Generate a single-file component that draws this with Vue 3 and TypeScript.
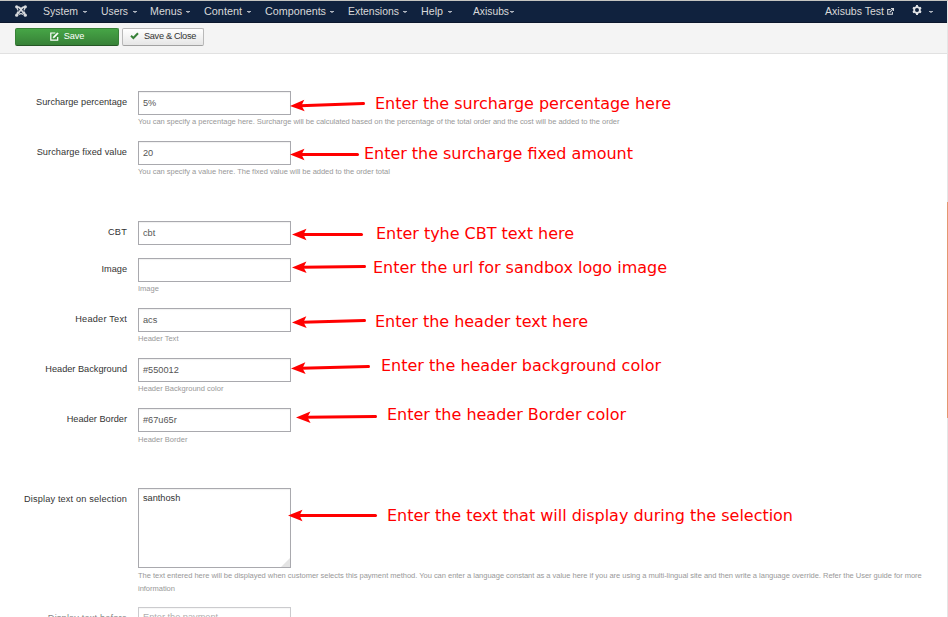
<script setup lang="ts">
interface MenuItem { label: string; width: number; spread: string; gap: number }
interface Field { label: string; value: string; tracking?: number; help?: string; low?: boolean; long?: boolean; end?: boolean; area?: boolean; faded?: boolean }
interface Note { text: string; x: number; y: number; width: number; from: [number, number]; to: [number, number] }

const menu: MenuItem[] = [
  { label: 'System', width: 58, spread: '35', gap: 5 },
  { label: 'Users', width: 49, spread: '27', gap: 5 },
  { label: 'Menus', width: 54, spread: '32', gap: 4 },
  { label: 'Content', width: 61, spread: '38', gap: 5 },
  { label: 'Components', width: 83, spread: '61', gap: 4 },
  { label: 'Extensions', width: 73, spread: '51', gap: 4 },
  { label: 'Help', width: 52, spread: '22', gap: 5 },
  { label: 'Axisubs', width: 50, spread: '36', gap: 1 },
]

const fields: Field[] = [
  { label: 'Surcharge percentage', value: '5%', long: true, help: 'You can specify a percentage here. Surcharge will be calculated based on the percentage of the total order and the cost will be added to the order' },
  { label: 'Surcharge fixed value', tracking: 0.07, value: '20', long: true, help: 'You can specify a value here. The fixed value will be added to the order total', end: true },
  { label: 'CBT', tracking: 0.2, value: 'cbt' },
  { label: 'Image', value: '', help: 'Image' },
  { label: 'Header Text', tracking: 0.22, value: 'acs', help: 'Header Text' },
  { label: 'Header Background', value: '#550012', help: 'Header Background color' },
  { label: 'Header Border', value: '#67u65r', help: 'Header Border', low: true, end: true },
  { label: 'Display text on selection', tracking: 0.16, value: 'santhosh', area: true, low: true, long: true, help: 'The text entered here will be displayed when customer selects this payment method. You can enter a language constant as a value here if you are using a multi-lingual site and then write a language override. Refer the User guide for more information' },
  { label: 'Display text before', tracking: 0.16, value: 'Enter the payment', area: true, faded: true },
]

const notes: Note[] = [
  { text: 'Enter the surcharge percentage here', x: 375, y: 109, width: 296, from: [363.5, 103.5], to: [290, 106] },
  { text: 'Enter the surcharge fixed amount', x: 364, y: 159, width: 269, from: [357.5, 154.5], to: [290, 154.5] },
  { text: 'Enter tyhe CBT text here', x: 376, y: 239, width: 198, from: [361.5, 234.5], to: [292, 234.5] },
  { text: 'Enter the url for sandbox logo image', x: 373, y: 273, width: 294, from: [364.5, 266.5], to: [292, 267.5] },
  { text: 'Enter the header text here', x: 375, y: 327, width: 213, from: [364.5, 320.5], to: [292, 322.5] },
  { text: 'Enter the header background color', x: 381, y: 371, width: 280, from: [368.5, 366.5], to: [291, 368.5] },
  { text: 'Enter the header Border color', x: 387, y: 420, width: 239, from: [375.5, 416.5], to: [296, 417.5] },
  { text: 'Enter the text that will display during the selection', x: 387, y: 521, width: 406, from: [375.5, 515.5], to: [288, 515.5] },
]

const angle = (n: Note): number => Math.atan2(n.from[1] - n.to[1], n.from[0] - n.to[0]) * 180 / Math.PI
const reach = (n: Note): number => Math.hypot(n.from[0] - n.to[0], n.from[1] - n.to[1])
</script>

<template>
  <div class="page">
    <header class="navbar">
      <svg class="brand" viewBox="0 0 12 12" width="12" height="12">
        <g fill="none" stroke="#d5d8dc" stroke-width="1.7">
          <path d="M2 2.2 Q4 1.8 5 3.2 L9.9 9.8 M10 2.2 Q8 1.8 7 3.2 L2.1 9.8" />
          <path d="M2.3 2.5 Q1.8 4.5 3.3 5.5 M9.7 2.5 Q10.2 4.5 8.7 5.5 M2.3 9.5 Q1.8 7.5 3.3 6.5 M9.7 9.5 Q10.2 7.5 8.7 6.5 M4 9.6 Q6 7.5 8 9.6 M4 2.5 Q6 4.5 8 2.5" stroke-width="1.3" />
        </g>
        <g fill="#d5d8dc"><circle cx="1.7" cy="1.8" r="1.6" /><circle cx="10.3" cy="1.8" r="1.6" /><circle cx="1.7" cy="10.2" r="1.6" /><circle cx="10.3" cy="10.2" r="1.6" /></g>
      </svg>
      <nav class="menu">
        <a v-for="m in menu" :key="m.label" class="menu-item" :style="{ width: m.width + 'px' }">
          <svg class="menu-text" :width="m.spread" height="16"><text x="0" y="11" :textLength="m.spread" lengthAdjust="spacingAndGlyphs">{{ m.label }}</text></svg>
          <i class="caret" :style="{ marginLeft: m.gap + 'px' }"></i>
        </a>
      </nav>
      <div class="account">
        <svg class="menu-text" width="59" height="16"><text x="0" y="11" textLength="59" lengthAdjust="spacingAndGlyphs">Axisubs Test</text></svg>
        <svg class="external" viewBox="0 0 8 8" width="7" height="7" fill="none" stroke="#d5d8dc">
          <path d="M4 1.7 H.8 V7.2 H6.2 V4.6 M3 5 L6.8 1.2" stroke-width="1.2" /><path d="M4.6 .6 H7.4 V3.4" stroke-width="1.3" />
        </svg>
        <svg class="gear" viewBox="0 0 10 10" width="10" height="10">
          <circle cx="5" cy="5" r="2.9" fill="none" stroke="#e1e3e6" stroke-width="1.8" />
          <path d="M5 0V2M5 8V10M.9 2.6L2.4 3.5M7.6 6.5L9.1 7.4M.9 7.4L2.4 6.5M7.6 3.5L9.1 2.6" stroke="#e1e3e6" stroke-width="1.9" />
        </svg>
        <i class="caret"></i>
      </div>
    </header>

    <div class="toolbar">
      <button class="btn save">
        <svg viewBox="0 0 9 9" width="9" height="9" fill="none" stroke="#fff">
          <path d="M5.3 1 H.8 V8.2 H7.7 V5" stroke-width="1.2" /><path d="M3 6 L3.5 4.5 L7.4 .7 L8.3 1.6 L4.5 5.5 Z" fill="#fff" stroke-width=".5" />
        </svg>
        <span>Save</span>
      </button>
      <button class="btn close">
        <svg viewBox="0 0 9 8" width="9" height="8"><path d="M1 3.8 L3.4 6 L8 1.3" fill="none" stroke="#378137" stroke-width="2" /></svg>
        <span>Save &amp; Close</span>
      </button>
    </div>

    <main class="form">
      <div v-for="f in fields" :key="f.label" class="row" :class="{ end: f.end, faded: f.faded }">
        <label class="label" :style="{ letterSpacing: (f.tracking ?? 0) + 'px' }">{{ f.label }}</label>
        <div class="control">
          <div class="box" :class="{ area: f.area }">
            {{ f.value }}
            <svg v-if="f.area" class="grip" viewBox="0 0 9 9" width="9" height="9"><path d="M9 0V9H0Z" fill="#e4e4e4" /></svg>
          </div>
          <p v-if="f.help" class="help" :class="{ low: f.low, long: f.long }">{{ f.help }}</p>
        </div>
      </div>
    </main>

    <svg class="notes" viewBox="0 0 948 617" width="948" height="617">
      <g v-for="n in notes" :key="n.text">
        <g :transform="`translate(${n.to[0]} ${n.to[1]}) rotate(${angle(n)})`">
          <path :d="`M10 0H${reach(n)}`" stroke="#f00" stroke-width="3" stroke-linecap="round" />
          <path d="M0 0L14.5 -5.8L11.5 0L14.5 5.8Z" fill="#f00" />
        </g>
        <text :x="n.x" :y="n.y" :textLength="n.width">{{ n.text }}</text>
      </g>
    </svg>
    <div class="scrollbar"><div class="thumb"></div></div>
  </div>
</template>

<style>
body { background: #fff; overflow: hidden; }
</style>

<style scoped>
.page { position: relative; width: 948px; height: 617px; overflow: hidden; box-sizing: border-box; font-family: "Liberation Sans", Arial, sans-serif; }
.navbar { display: flex; height: 23px; box-sizing: border-box; align-items: center; padding: 0 15px; background: #10223e; border-top: 1px solid #c5c5c1; border-bottom: 1px solid #0b172d; }
.brand { flex: none; margin: -1px 16px 0 0; }
.menu { display: flex; }
.menu-item { display: flex; align-items: center; height: 16px; flex: none; }
.menu-text { display: block; flex: none; overflow: visible; fill: #d9d9d9; font-size: 11.2px; }
.caret { width: 4px; height: 1px; border-top: 1px solid #aeb4be; margin-top: 1px; flex: none; position: relative; }
.caret::after { content: ""; position: absolute; left: 1px; top: 0; width: 2px; height: 1px; background: #7c8595; }
.account { display: flex; align-items: center; margin-left: auto; }
.external { margin-left: 3px; }
.gear { margin: -3px 7px 0 18px; }
.toolbar { display: flex; gap: 3px; height: 31px; box-sizing: border-box; padding: 5px 15px 0; background: #f4f4f4; border-bottom: 1px solid #e1e1e1; }
.btn { display: flex; align-items: center; justify-content: center; height: 18px; padding: 0 0 2px; box-sizing: border-box; border: 1px solid #b9b9b9; border-bottom-color: #a2a2a2; border-radius: 2px; font: 9.2px/14px "Liberation Sans", Arial, sans-serif; color: #333; background: linear-gradient(#fff, #e6e6e6); }
.save { width: 104px; gap: 5px; letter-spacing: -0.1px; color: #fff; border-color: #378137 #378137 #255625; background: linear-gradient(#46a546, #378137); }
.close { width: 82px; gap: 5px; letter-spacing: -0.3px; }
.form { padding-top: 37px; }
.row { display: flex; gap: 11px; margin-bottom: 13px; }
.row.end { margin-bottom: 43px; }
.label { width: 127px; flex: none; text-align: right; font-size: 9.2px; line-height: 22px; color: #333; white-space: nowrap; }
.control { width: 797px; }
.box { position: relative; box-sizing: border-box; width: 153px; height: 24px; padding: 0 4px; border: 1px solid #a9a9ae; box-shadow: inset 0 1px 1px rgba(0, 0, 0, .06); font-size: 9.2px; line-height: 22px; color: #555; }
.box.area { height: 80px; line-height: 18px; color: #333; }
.grip { position: absolute; right: 0; bottom: 0; }
.help { margin: 0; font-size: 7.54px; line-height: 13px; color: #999; }
.help.long { letter-spacing: -0.03px; }
.help.low { padding-top: 1px; margin-bottom: -1px; }
.faded { opacity: .6; }
.faded .box.area { color: #777; }
.notes { position: absolute; left: 0; top: 0; pointer-events: none; fill: #f00; font-family: "DejaVu Sans", sans-serif; font-size: 16px; }
.scrollbar { position: absolute; right: 0; top: 1px; width: 1px; height: 616px; padding-top: 201px; box-sizing: border-box; background: #e5e5e5; }
.thumb { height: 216px; background: #e5976f; }
</style>
